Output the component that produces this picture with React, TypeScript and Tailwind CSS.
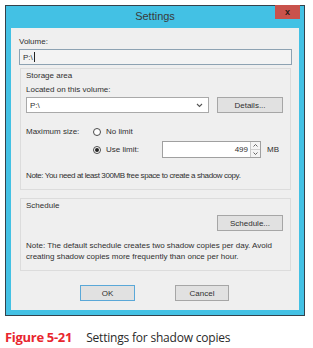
import React from 'react';

const ui = { fontFamily: '"Liberation Sans", Arial, sans-serif' };
const cap = { fontFamily: '"Open Sans", "Liberation Sans", sans-serif' };

function Radio({ checked, label }: { checked?: boolean; label: string }) {
  return (
    <div className="flex items-center gap-[5px]">
      <span className="w-[8px] h-[8px] rounded-full border border-[#4a4a4a] bg-white flex items-center justify-center">
        {checked && <span className="w-[4px] h-[4px] rounded-full bg-[#222]" />}
      </span>
      <span>{label}</span>
    </div>
  );
}

function Btn({ children, w, primary }: { children: React.ReactNode; w: string; primary?: boolean }) {
  return (
    <div
      className={`${w} h-[16px] flex items-center justify-center bg-[#e1e1e1] border ${
        primary ? 'border-[#5aa8d8]' : 'border-[#a6a6a6]'
      }`}
    >
      {children}
    </div>
  );
}

export default function App() {
  return (
    <div className="w-[313px] h-[348px] bg-white pt-[5px] pl-[5px]" style={ui}>
      <div className="w-[300px] border border-[#34424c] bg-[#43c1e4]">
        {/* title bar */}
        <div className="relative h-[22px] flex items-center justify-center">
          <span className="text-[11px] text-[#3a3a3a] mt-[-1px]">Settings</span>
          <div className="absolute right-[4px] top-[-1px] w-[25px] h-[14px] bg-[#c9524b] flex items-center justify-center">
            <span className="text-[9px] font-bold text-[#2a1a1a] leading-none">x</span>
          </div>
        </div>

        {/* client area */}
        <div className="mx-[5px] mb-[5px] h-[282px] bg-[#efefef] text-[8px] text-[#303030] leading-[11px] pl-[8px] pr-[7px]">
          <div className="pt-[8px]">Volume:</div>
          <div className="mt-[2px] h-[16px] border border-[#8da2b2] bg-[#f3f3f3] flex items-center pl-[3px]">
            P:\<span className="w-px h-[10px] bg-[#222] ml-[1px]" />
          </div>

          {/* Storage area */}
          <div className="mt-[3px] ml-[1px] mr-[1px] h-[122px] border border-[#dcdcdc] px-[5px]">
            <div className="pt-[1px]">Storage area</div>
            <div className="mt-[3px]">Located on this volume:</div>
            <div className="mt-[2px] flex items-center">
              <div className="w-[183px] h-[16px] border border-[#a9a9a9] bg-white flex items-center justify-between pl-[3px] pr-[5px]">
                <span>P:\</span>
                <svg width="7" height="5" viewBox="0 0 7 5">
                  <path d="M1 1 L3.5 3.5 L6 1" stroke="#555" strokeWidth="1.1" fill="none" />
                </svg>
              </div>
              <div className="ml-[8px]">
                <Btn w="w-[66px]">Details...</Btn>
              </div>
            </div>

            <div className="mt-[13px] flex items-center">
              <span className="w-[67px]">Maximum size:</span>
              <Radio label="No limit" />
            </div>
            <div className="mt-[4px] flex items-center">
              <span className="w-[67px]" />
              <div className="w-[69px]">
                <Radio checked label="Use limit:" />
              </div>
              <div className="flex h-[17px] border border-[#a0a0a0] bg-white">
                <div className="w-[87px] flex items-center justify-end pr-[2px]">499</div>
                <div className="w-[10px] border-l border-[#c8c8c8] bg-[#f4f4f4] flex flex-col">
                  <div className="flex-1 flex items-center justify-center border-b border-[#d0d0d0]">
                    <svg width="5" height="3" viewBox="0 0 5 3">
                      <path d="M0.5 2.5 L2.5 0.5 L4.5 2.5" stroke="#555" strokeWidth="0.9" fill="none" />
                    </svg>
                  </div>
                  <div className="flex-1 flex items-center justify-center">
                    <svg width="5" height="3" viewBox="0 0 5 3">
                      <path d="M0.5 0.5 L2.5 2.5 L4.5 0.5" stroke="#555" strokeWidth="0.9" fill="none" />
                    </svg>
                  </div>
                </div>
              </div>
              <span className="ml-[6px]">MB</span>
            </div>
            <div className="mt-[12px] tracking-[-0.4px] whitespace-nowrap">
              Note: You need at least 300MB free space to create a shadow copy.
            </div>
          </div>

          {/* Schedule */}
          <div className="mt-[8px] ml-[1px] mr-[1px] h-[73px] border border-[#dcdcdc] px-[5px]">
            <div className="pt-[1px]">Schedule</div>
            <div className="mt-[4px] flex justify-end pr-[2px]">
              <Btn w="w-[66px]">Schedule...</Btn>
            </div>
            <div className="mt-[9px]">
              Note: The default schedule creates two shadow copies per day. Avoid creating shadow copies more
              frequently than once per hour.
            </div>
          </div>

          {/* buttons */}
          <div className="mt-[14px] flex">
            <div className="ml-[61px]">
              <Btn w="w-[55px]" primary>
                OK
              </Btn>
            </div>
            <div className="ml-[40px]">
              <Btn w="w-[54px]">Cancel</Btn>
            </div>
          </div>
        </div>
      </div>

      <div className="mt-[12px] flex items-baseline" style={cap}>
        <span className="text-[13px] font-bold text-[#e8262e] tracking-[-0.3px]">Figure 5-21</span>
        <span className="ml-[14px] text-[12px] text-[#2a2a2a] tracking-[-0.2px]">Settings for shadow copies</span>
      </div>
    </div>
  );
}
